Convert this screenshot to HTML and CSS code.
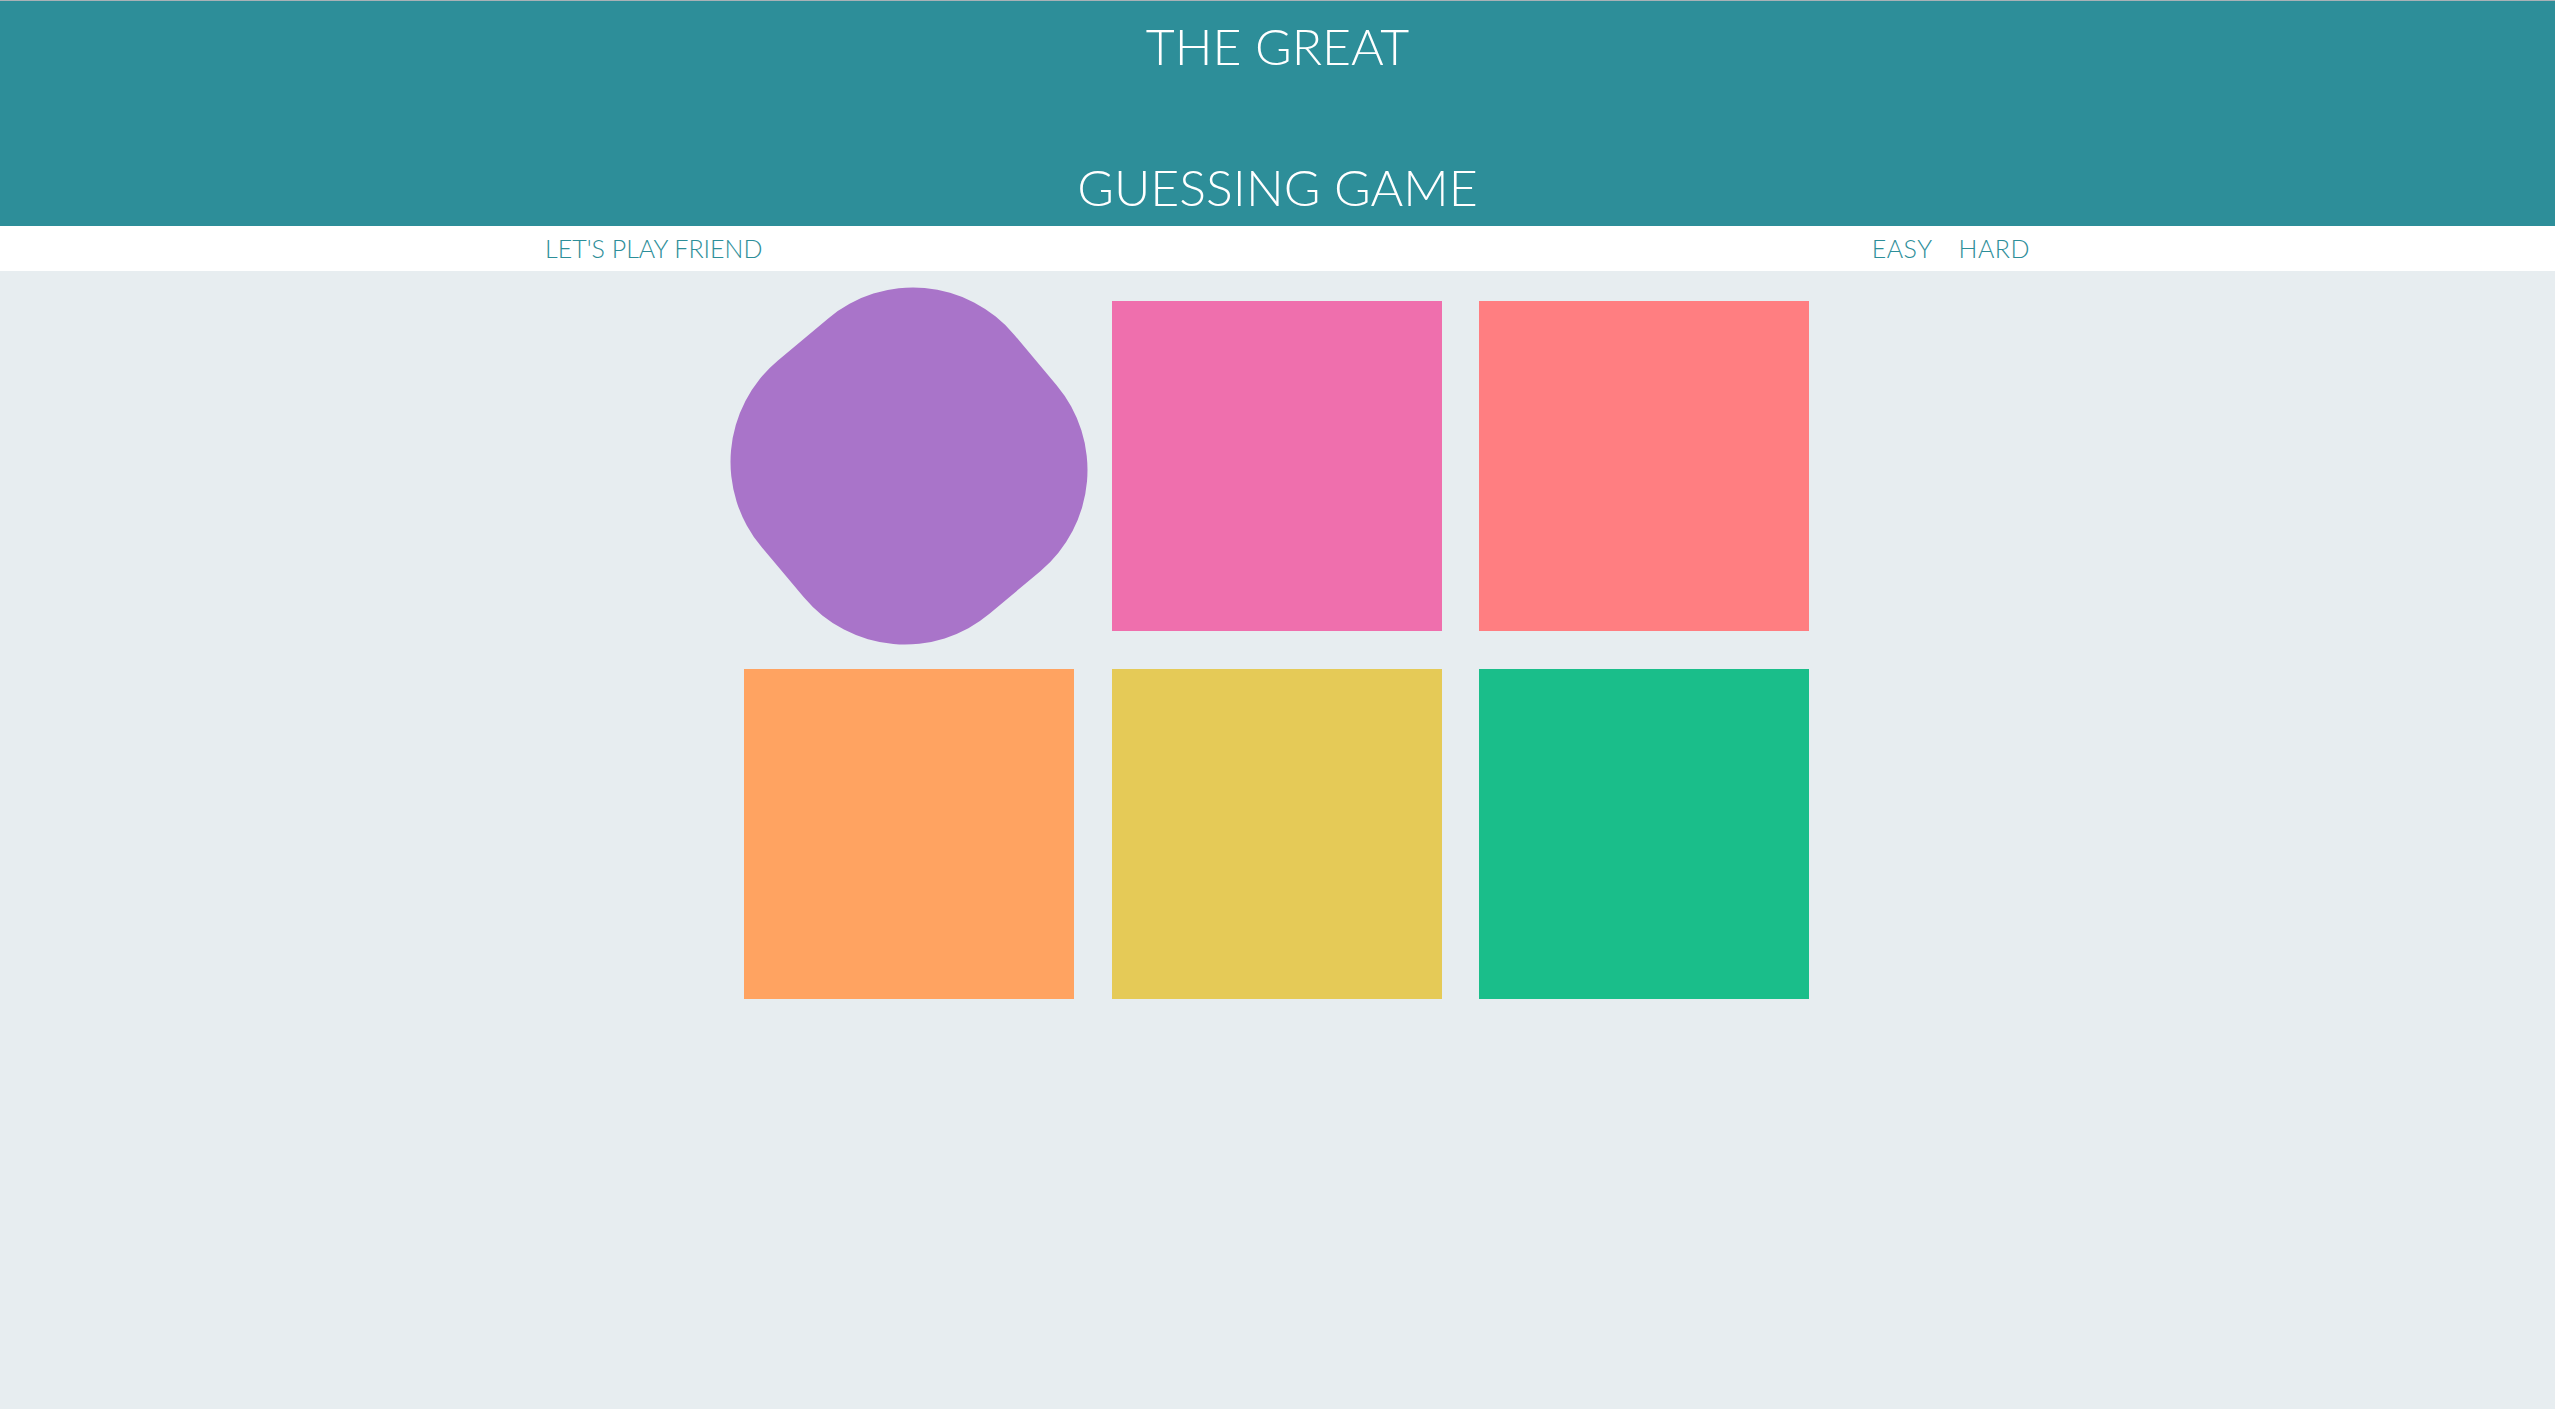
FILE: index.html
```html
<!DOCTYPE html>
<html lang="en">
<head>
<meta charset="utf-8">
<title>The Great Guessing Game</title>
<link rel="stylesheet" href="styles.css">
</head>
<body>
<h1 class="title">
  <span class="title-line">THE GREAT</span>
  <span class="title-line title-empty"></span>
  <span class="title-line">GUESSING GAME</span>
</h1>
<div class="stripe">
  <span class="message">LET'S PLAY FRIEND</span>
  <span class="modes">
    <button class="mode">EASY</button>
    <button class="mode">HARD</button>
  </span>
</div>
<div class="board">
  <div class="square square-purple"></div>
  <div class="square square-pink"></div>
  <div class="square square-salmon"></div>
  <div class="square square-orange"></div>
  <div class="square square-yellow"></div>
  <div class="square square-green"></div>
</div>
</body>
</html>
```
FILE: styles.css
```css
html, body {
  margin: 0;
  padding: 0;
}
body {
  background: #e7edf0;
  border-top: 1px solid #a9b1b6;
  font-family: "Lato", "Open Sans", sans-serif;
  min-height: 1408px;
}
.title {
  margin: 0;
  background: #2d8e99;
  color: #ffffff;
  font-weight: 300;
  font-size: 50px;
  line-height: 70.5px;
  text-align: center;
  padding: 10px 0 3px;
}
.title-line {
  display: block;
  height: 70.5px;
}
.stripe {
  background: #ffffff;
  height: 45px;
  display: flex;
  align-items: center;
  justify-content: space-between;
  padding: 0 525px 0 545px;
  color: #2d8e99;
  font-size: 25px;
  font-weight: 300;
}
.modes {
  display: flex;
  gap: 26px;
}
.mode {
  background: none;
  border: none;
  padding: 0;
  margin: 0;
  font: inherit;
  color: inherit;
  letter-spacing: 0.5px;
}
.board {
  width: 1065px;
  padding-right: 2px;
  margin: 30px auto 0;
  display: grid;
  grid-template-columns: repeat(3, 330px);
  column-gap: 37.5px;
  row-gap: 38px;
}
.square {
  width: 330px;
  height: 330px;
}
.square-purple {
  background: #a974c9;
  border-radius: 40%;
  transform: rotate(50deg);
}
.square-pink { background: #ef6fad; }
.square-salmon { background: #ff7e81; }
.square-orange { background: #ffa361; }
.square-yellow { background: #e5ca57; }
.square-green { background: #1abe8a; }
```
